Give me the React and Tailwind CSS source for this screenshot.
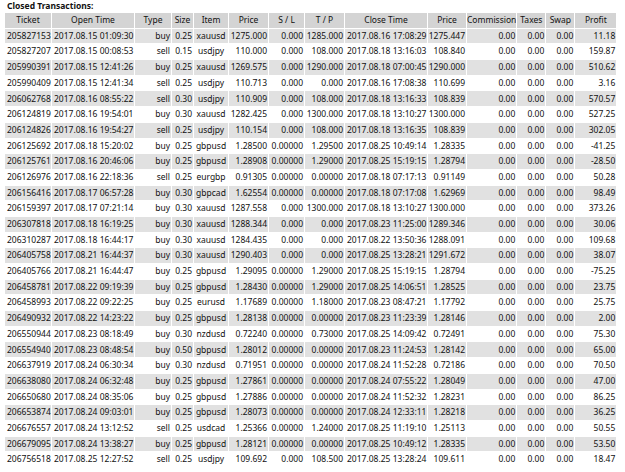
const rows = [
  ['205827153', '2017.08.15 01:09:30', 'buy', '0.25', 'xauusd', '1275.000', '0.000', '1285.000', '2017.08.16 17:08:29', '1275.447', '11.18'],
  ['205827207', '2017.08.15 00:08:53', 'sell', '0.15', 'usdjpy', '110.000', '0.000', '108.000', '2017.08.18 13:16:03', '108.840', '159.87'],
  ['205990391', '2017.08.15 12:41:26', 'buy', '0.25', 'xauusd', '1269.575', '0.000', '1290.000', '2017.08.18 07:00:45', '1290.000', '510.62'],
  ['205990409', '2017.08.15 12:41:34', 'sell', '0.25', 'usdjpy', '110.713', '0.000', '0.000', '2017.08.16 17:08:38', '110.699', '3.16'],
  ['206062768', '2017.08.16 08:55:22', 'sell', '0.30', 'usdjpy', '110.909', '0.000', '108.000', '2017.08.18 13:16:33', '108.839', '570.57'],
  ['206124819', '2017.08.16 19:54:01', 'buy', '0.30', 'xauusd', '1282.425', '0.000', '1300.000', '2017.08.18 13:10:27', '1300.000', '527.25'],
  ['206124826', '2017.08.16 19:54:27', 'sell', '0.25', 'usdjpy', '110.154', '0.000', '108.000', '2017.08.18 13:16:35', '108.839', '302.05'],
  ['206125692', '2017.08.18 15:20:02', 'buy', '0.25', 'gbpusd', '1.28500', '0.00000', '1.29500', '2017.08.25 10:49:14', '1.28335', '-41.25'],
  ['206125761', '2017.08.16 20:46:06', 'buy', '0.25', 'gbpusd', '1.28908', '0.00000', '1.29000', '2017.08.25 15:19:15', '1.28794', '-28.50'],
  ['206126976', '2017.08.16 22:18:36', 'sell', '0.25', 'eurgbp', '0.91305', '0.00000', '0.00000', '2017.08.18 07:17:13', '0.91149', '50.28'],
  ['206156416', '2017.08.17 06:57:28', 'buy', '0.30', 'gbpcad', '1.62554', '0.00000', '0.00000', '2017.08.18 07:17:08', '1.62969', '98.49'],
  ['206159397', '2017.08.17 07:21:14', 'buy', '0.30', 'xauusd', '1287.558', '0.000', '1300.000', '2017.08.18 13:10:27', '1300.000', '373.26'],
  ['206307818', '2017.08.18 16:19:25', 'buy', '0.30', 'xauusd', '1288.344', '0.000', '0.000', '2017.08.23 11:25:00', '1289.346', '30.06'],
  ['206310287', '2017.08.18 16:44:17', 'buy', '0.30', 'xauusd', '1284.435', '0.000', '0.000', '2017.08.22 13:50:36', '1288.091', '109.68'],
  ['206405758', '2017.08.21 16:44:37', 'buy', '0.30', 'xauusd', '1290.403', '0.000', '0.000', '2017.08.25 13:28:21', '1291.672', '38.07'],
  ['206405766', '2017.08.21 16:44:47', 'buy', '0.25', 'gbpusd', '1.29095', '0.00000', '1.29000', '2017.08.25 15:19:15', '1.28794', '-75.25'],
  ['206458781', '2017.08.22 09:19:39', 'buy', '0.25', 'gbpusd', '1.28430', '0.00000', '1.29000', '2017.08.25 14:06:51', '1.28525', '23.75'],
  ['206458993', '2017.08.22 09:22:25', 'buy', '0.25', 'eurusd', '1.17689', '0.00000', '1.18000', '2017.08.23 08:47:21', '1.17792', '25.75'],
  ['206490932', '2017.08.22 14:23:22', 'buy', '0.25', 'gbpusd', '1.28138', '0.00000', '0.00000', '2017.08.23 11:23:39', '1.28146', '2.00'],
  ['206550944', '2017.08.23 08:18:49', 'buy', '0.30', 'nzdusd', '0.72240', '0.00000', '0.73000', '2017.08.25 14:09:42', '0.72491', '75.30'],
  ['206554940', '2017.08.23 08:48:54', 'buy', '0.50', 'gbpusd', '1.28012', '0.00000', '0.00000', '2017.08.23 11:24:53', '1.28142', '65.00'],
  ['206637919', '2017.08.24 06:30:34', 'buy', '0.30', 'nzdusd', '0.71951', '0.00000', '0.00000', '2017.08.24 11:52:28', '0.72186', '70.50'],
  ['206638080', '2017.08.24 06:32:48', 'buy', '0.25', 'gbpusd', '1.27861', '0.00000', '0.00000', '2017.08.24 07:55:22', '1.28049', '47.00'],
  ['206650680', '2017.08.24 08:35:06', 'buy', '0.25', 'gbpusd', '1.27886', '0.00000', '0.00000', '2017.08.24 11:52:32', '1.28231', '86.25'],
  ['206653874', '2017.08.24 09:03:01', 'buy', '0.25', 'gbpusd', '1.28073', '0.00000', '0.00000', '2017.08.24 12:33:11', '1.28218', '36.25'],
  ['206676557', '2017.08.24 13:12:52', 'sell', '0.25', 'usdcad', '1.25366', '0.00000', '1.24000', '2017.08.25 11:19:10', '1.25113', '50.55'],
  ['206679095', '2017.08.24 13:38:27', 'buy', '0.25', 'gbpusd', '1.28121', '0.00000', '0.00000', '2017.08.25 10:49:12', '1.28335', '53.50'],
  ['206756518', '2017.08.25 12:27:52', 'sell', '0.25', 'usdjpy', '109.692', '0.000', '108.500', '2017.08.25 13:28:24', '109.611', '18.47'],
];

// widths exclude the 1px border spacing between cells
const headers = [
  ['Ticket', 'w-[46px]'], ['Open Time', 'w-[82px]'], ['Type', 'w-[36px]'], ['Size', 'w-[21px]'],
  ['Item', 'w-[34px]'], ['Price', 'w-[39px]'], ['S / L', 'w-[35px]'], ['T / P', 'w-[39px]'],
  ['Close Time', 'w-[82px]'], ['Price', 'w-[38px]'], ['Commission', 'w-[49px]'], ['Taxes', 'w-[28px]'],
  ['Swap', 'w-[28px]'], ['Profit', 'w-[41px]'],
];

export default function App() {
  return (
    <div className="bg-white w-[625px] h-[472px] overflow-hidden pl-[4px] pt-[1px] font-['Liberation_Sans',Arial,sans-serif] text-[8.5px] leading-none text-[#111]">
      <div className="font-bold text-[8.5px] h-[11px] pl-[3px] pt-[1px]">Closed Transactions:</div>
      <table className="table-fixed border-separate border-spacing-x-px border-spacing-y-px">
        <thead>
          <tr>
            {headers.map(([h, w], i) => (
              <th key={i} className={`${w} bg-[#d4d4d4] h-[14.7px] font-normal text-center whitespace-nowrap overflow-hidden p-0`}>{h}</th>
            ))}
          </tr>
        </thead>
        <tbody>
          {rows.map((r, i) => {
            const bg = i % 2 === 0 ? 'bg-[#e1e1e1]' : 'bg-white';
            const c = `${bg} h-[14.7px] p-0 whitespace-nowrap overflow-hidden`;
            return (
              <tr key={r[0]}>
                <td className={`${c} text-left pl-[2px]`}>{r[0]}</td>
                <td className={`${c} text-left pl-[2px]`}>{r[1]}</td>
                <td className={`${c} text-right pr-[1px]`}>{r[2]}</td>
                <td className={`${c} text-right pr-[1px]`}>{r[3]}</td>
                <td className={`${c} text-center`}>{r[4]}</td>
                <td className={`${c} text-right pr-[1px]`}>{r[5]}</td>
                <td className={`${c} text-right pr-[1px]`}>{r[6]}</td>
                <td className={`${c} text-right pr-[1px]`}>{r[7]}</td>
                <td className={`${c} text-left pl-[2px]`}>{r[8]}</td>
                <td className={`${c} text-right pr-[1px]`}>{r[9]}</td>
                <td className={`${c} text-right pr-[1px]`}>0.00</td>
                <td className={`${c} text-right pr-[1px]`}>0.00</td>
                <td className={`${c} text-right pr-[1px]`}>0.00</td>
                <td className={`${c} text-right pr-[1px]`}>{r[10]}</td>
              </tr>
            );
          })}
        </tbody>
      </table>
    </div>
  );
}
